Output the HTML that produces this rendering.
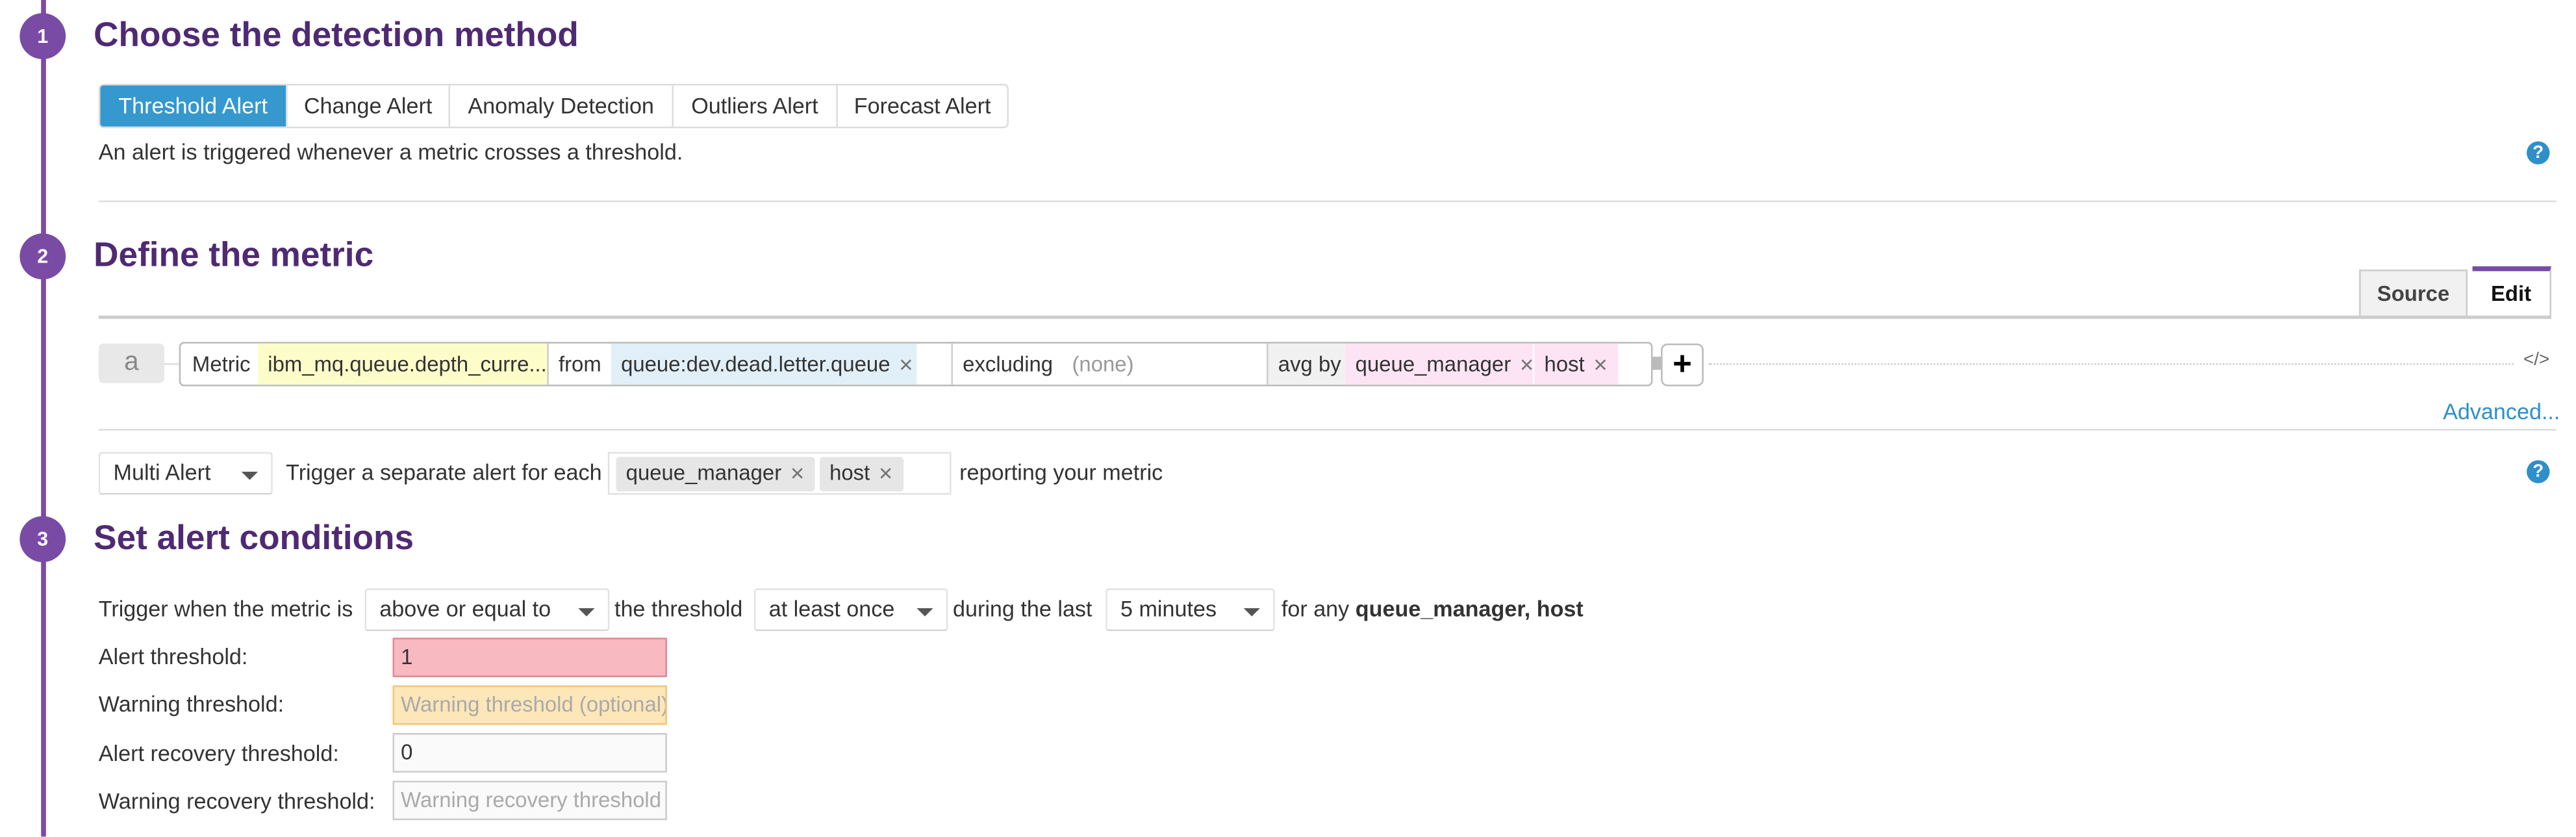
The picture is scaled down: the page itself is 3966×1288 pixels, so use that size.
<!DOCTYPE html>
<html><head><meta charset="utf-8"><style>
html,body{margin:0;padding:0;background:#fff;width:3966px;height:1288px;overflow:hidden}
#s{position:absolute;left:0;top:0;width:1568px;height:509px;transform:scale(2.5293);transform-origin:0 0;font-family:"Liberation Sans",sans-serif;font-size:13.5px;color:#333}
.a{position:absolute;white-space:nowrap}
.c{position:absolute;left:12px;width:28px;height:28px;border-radius:50%;background:#7a4ba5;color:#fff;font-weight:bold;font-size:12px;text-align:center;line-height:28px}
.h{position:absolute;left:57px;font-size:21px;font-weight:bold;color:#4f2a73}
.hr{position:absolute;left:60px;right:12px;height:1px;background:#ddd}
.bx{position:absolute;box-sizing:border-box;display:flex;align-items:center}
.dd{position:absolute;box-sizing:border-box;border:1px solid #e2e2e2;border-bottom-color:#d4d4d4;border-radius:2px;padding-left:8px;line-height:24px;height:26px}
.dd:after{content:"";position:absolute;right:8px;top:11px;border-left:5px solid transparent;border-right:5px solid transparent;border-top:5px solid #555}
.in{position:absolute;left:239px;width:167px;height:24px;box-sizing:border-box;padding-left:4px;line-height:22px;font-size:13px;white-space:nowrap;overflow:hidden}
.q{position:absolute;width:14px;height:14px;border-radius:50%;background:#2e8fc9;color:#fff;font-size:11px;font-weight:bold;text-align:center;line-height:14px}
.x{color:#777;font-size:11px;margin-left:5px}
</style></head><body><div id="s">
<div class="a" style="left:25px;top:0;width:3px;height:509px;background:#7a4ba5"></div>
<div class="c" style="top:8px">1</div>
<div class="c" style="top:142px">2</div>
<div class="c" style="top:314px">3</div>

<div class="h" style="top:10px">Choose the detection method</div>
<div class="bx" style="left:60px;top:51px;width:554px;height:27px;border:1px solid #ddd;border-radius:3px;overflow:hidden;font-size:13.5px">
<div style="width:114px;height:100%;background:#3598cf;color:#fff;text-align:center;line-height:26px">Threshold Alert</div>
<div style="width:99px;height:100%;border-left:1px solid #ddd;text-align:center;line-height:26px">Change Alert</div>
<div style="width:136px;height:100%;border-left:1px solid #ddd;text-align:center;line-height:26px">Anomaly Detection</div>
<div style="width:100px;height:100%;border-left:1px solid #ddd;text-align:center;line-height:26px">Outliers Alert</div>
<div style="width:104px;height:100%;border-left:1px solid #ddd;text-align:center;line-height:26px">Forecast Alert</div>
</div>
<div class="a" style="left:60px;top:85px">An alert is triggered whenever a metric crosses a threshold.</div>
<div class="q" style="left:1538px;top:86px">?</div>
<div class="hr" style="top:122px"></div>

<div class="h" style="top:144px">Define the metric</div>
<div class="a" style="left:1436px;top:164px;width:66px;height:28px;background:#f1f1f1;border:1px solid #ccc;border-bottom:none;box-sizing:border-box;text-align:center;line-height:28px;font-weight:bold;font-size:13px;color:#444">Source</div>
<div class="a" style="left:1505px;top:162px;width:48px;height:31px;background:#fff;border-top:3px solid #7a4ba5;border-right:1px solid #ccc;box-sizing:border-box;text-align:center;line-height:28px;font-weight:bold;font-size:13px;color:#111">Edit</div>
<div class="hr" style="top:192px;height:2px;background:#ccc;right:15px"></div>

<div class="a" style="left:60px;top:209px;width:40px;height:24px;background:#e8e8e8;border-radius:3px;text-align:center;line-height:24px;color:#888;font-size:16px">a</div>
<div class="a" style="left:100px;top:221px;width:9px;height:1px;background:#ddd"></div>
<div class="bx" style="left:109px;top:208px;width:897px;height:27px;border:1px solid #bbb;border-radius:3px;overflow:hidden;font-size:13px">
<div style="width:47px;padding-left:7px;box-sizing:border-box">Metric</div>
<div style="width:176px;height:100%;background:#fdfdca;padding-left:6px;box-sizing:border-box;line-height:25px">ibm_mq.queue.depth_curre...</div>
<div style="width:39px;height:100%;border-left:1px solid #ccc;padding-left:6px;box-sizing:border-box;line-height:25px">from</div>
<div style="width:186px;height:100%;background:#e1eff8;padding-left:6px;box-sizing:border-box;line-height:25px">queue:dev.dead.letter.queue<span class="x">✕</span></div>
<div style="width:21px"></div>
<div style="width:192px;height:100%;border-left:1px solid #ccc;padding-left:6px;box-sizing:border-box;line-height:25px">excluding <span style="color:#999;margin-left:8px">(none)</span></div>
<div style="width:48px;height:100%;background:#f1f1f1;border-left:1px solid #ccc;padding-left:6px;box-sizing:border-box;line-height:25px">avg by</div>
<div style="width:114px;height:100%;background:#fde4f5;padding-left:6px;box-sizing:border-box;line-height:25px">queue_manager<span class="x">✕</span></div>
<div style="width:52px;height:100%;background:#fde4f5;border-left:1px solid #fff;padding-left:6px;box-sizing:border-box;line-height:25px">host<span class="x">✕</span></div>
</div>
<div class="a" style="left:1006px;top:217px;width:5px;height:8px;background:#bbb"></div>
<div class="a" style="left:1011px;top:209px;width:26px;height:26px;border:1px solid #bbb;border-radius:4px;box-sizing:border-box;text-align:center;line-height:24px;font-size:20px;font-weight:bold;color:#000">+</div>
<div class="a" style="left:1040px;top:221px;width:490px;border-top:1px dotted #ccc"></div>
<div class="a" style="left:1536px;top:213px;font-size:11px;color:#666">&lt;/&gt;</div>
<div class="a" style="left:1487px;top:243px;color:#2e8fc9;font-size:13.5px">Advanced...</div>
<div class="hr" style="top:261px"></div>

<div class="dd" style="left:60px;top:275px;width:106px">Multi Alert</div>
<div class="a" style="left:174px;top:280px">Trigger a separate alert for each</div>
<div class="bx" style="left:370px;top:275px;width:209px;height:26px;border:1px solid #e2e2e2;padding-left:4px;font-size:13px">
<div style="background:#e6e6e6;border-radius:2px;padding:0 6px;line-height:20px;margin-right:3px">queue_manager<span class="x">✕</span></div>
<div style="background:#e6e6e6;border-radius:2px;padding:0 6px;line-height:20px">host<span class="x">✕</span></div>
</div>
<div class="a" style="left:584px;top:280px">reporting your metric</div>
<div class="q" style="left:1538px;top:280px">?</div>

<div class="h" style="top:316px">Set alert conditions</div>
<div class="a" style="left:60px;top:363px">Trigger when the metric is</div>
<div class="dd" style="left:222px;top:358px;width:149px">above or equal to</div>
<div class="a" style="left:374px;top:363px">the threshold</div>
<div class="dd" style="left:459px;top:358px;width:118px">at least once</div>
<div class="a" style="left:580px;top:363px">during the last</div>
<div class="dd" style="left:673px;top:358px;width:103px">5 minutes</div>
<div class="a" style="left:780px;top:363px">for any <b>queue_manager, host</b></div>

<div class="a" style="left:60px;top:392px">Alert threshold:</div>
<div class="in" style="top:388px;background:#f8b9c1;border:1px solid #e08a96">1</div>
<div class="a" style="left:60px;top:421px">Warning threshold:</div>
<div class="in" style="top:417px;background:#fde6b8;border:1px solid #f0c67a;color:#aaa">Warning threshold (optional)</div>
<div class="a" style="left:60px;top:451px">Alert recovery threshold:</div>
<div class="in" style="top:446px;background:#fafafa;border:1px solid #ccc">0</div>
<div class="a" style="left:60px;top:480px">Warning recovery threshold:</div>
<div class="in" style="top:475px;background:#fafafa;border:1px solid #ccc;color:#aaa">Warning recovery threshold</div>
</div></body></html>
